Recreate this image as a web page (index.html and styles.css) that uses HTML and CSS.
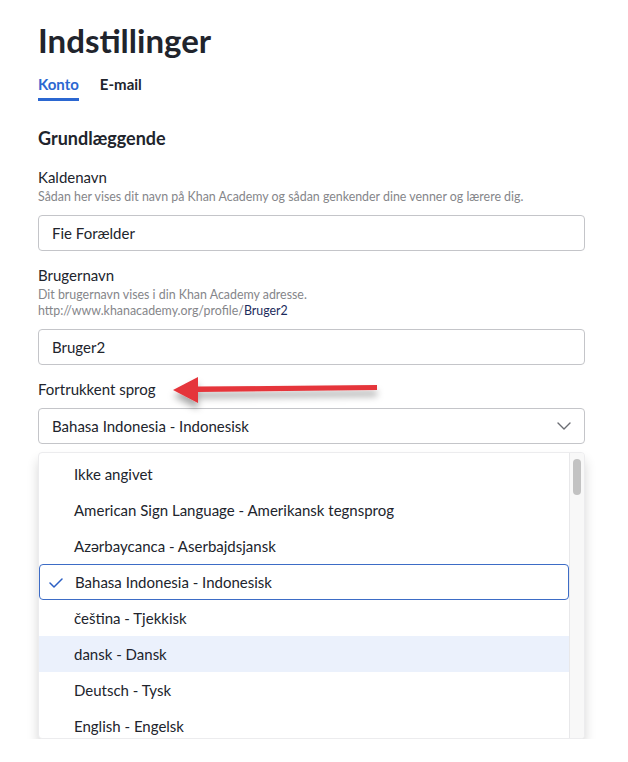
FILE: index.html
```html
<!DOCTYPE html>
<html lang="da">
<head>
    <meta charset="UTF-8">
    <meta name="viewport" content="width=device-width, initial-scale=1.0">
    <title>Indstillinger</title>
    <link rel="stylesheet" href="styles.css">
</head>
<body>
    <div class="page">
        <h1 class="page-title">Indstillinger</h1>

        <!-- Faner -->
        <div class="tabs">
            <a class="tab active" href="#">Konto</a>
            <a class="tab" href="#">E-mail</a>
        </div>

        <h2 class="section-title">Grundlæggende</h2>

        <div class="field">
            <label class="field-label" for="nickname">Kaldenavn</label>
            <p class="field-desc">Sådan her vises dit navn på Khan Academy og sådan genkender dine venner og lærere dig.</p>
            <input class="text-input" id="nickname" type="text" value="Fie Forælder">
        </div>

        <div class="field">
            <label class="field-label" for="username">Brugernavn</label>
            <p class="field-desc">Dit brugernavn vises i din Khan Academy adresse.<br>http://www.khanacademy.org/profile/<span class="desc-link">Bruger2</span></p>
            <input class="text-input" id="username" type="text" value="Bruger2">
        </div>

        <div class="field">
            <label class="field-label no-desc">Fortrukkent sprog</label>
            <div class="select-box">
                <span>Bahasa Indonesia - Indonesisk</span>
                <svg class="chevron" width="14" height="8" viewBox="0 0 14 8">
                    <path d="M1 1l6 6 6-6" fill="none" stroke="#6b6d73" stroke-width="1.4" stroke-linecap="round" stroke-linejoin="round"/>
                </svg>
            </div>

            <!-- Åben liste med sprog -->
            <div class="dropdown">
                <ul class="options">
                    <li>Ikke angivet</li>
                    <li>American Sign Language - Amerikansk tegnsprog</li>
                    <li>Azərbaycanca - Aserbajdsjansk</li>
                    <li class="selected">
                        <svg class="check" width="14" height="10" viewBox="0 0 14 10">
                            <path d="M1 5l4 4 8-8" fill="none" stroke="#2b5fc4" stroke-width="1.5" stroke-linecap="round" stroke-linejoin="round"/>
                        </svg>
                        Bahasa Indonesia - Indonesisk
                    </li>
                    <li>čeština - Tjekkisk</li>
                    <li class="hover">dansk - Dansk</li>
                    <li>Deutsch - Tysk</li>
                    <li>English - Engelsk</li>
                </ul>
                <div class="scrollbar"><div class="thumb"></div></div>
            </div>
        </div>
    </div>

    <!-- Rød pil der peger på sprogvalget -->
    <svg class="arrow" width="240" height="50" viewBox="0 0 240 50">
        <defs>
            <filter id="arrowShadow" x="-20%" y="-50%" width="140%" height="220%">
                <feDropShadow dx="0" dy="6" stdDeviation="3.5" flood-color="#000" flood-opacity="0.35"/>
            </filter>
        </defs>
        <g filter="url(#arrowShadow)">
            <path d="M47 21.5 L227 20 L227 25 L47 27 Z" fill="#e5343a"/>
            <path d="M23 25 L48 12 L48 38 Z" fill="#e5343a"/>
        </g>
    </svg>
</body>
</html>
```

FILE: styles.css
```css
body {
    margin: 0;
    padding: 0;
    background-color: #ffffff;
    color: #21242c;
    font-family: Lato, "Open Sans", sans-serif;
}

.page {
    width: 547px;
    margin-left: 38px;
    padding-top: 20px;
}

/* Overskrift */
.page-title {
    margin: 0;
    font-size: 33px;
    line-height: 40px;
    font-weight: 700;
}

/* Faner */
.tabs {
    display: flex;
    gap: 21px;
    margin-top: 14px;
}
.tab {
    font-size: 15px;
    line-height: 20px;
    font-weight: 700;
    color: #21242c;
    text-decoration: none;
    padding-bottom: 4px;
    border-bottom: 3px solid transparent;
}
.tab.active {
    color: #2b67d1;
    border-bottom-color: #2b67d1;
}

.section-title {
    margin: 25px 0 0;
    font-size: 18px;
    line-height: 24px;
    font-weight: 700;
}

/* Felter */
.field {
    margin-top: 17px;
}
.field + .field {
    margin-top: 14px;
}
.field-label {
    display: block;
    font-size: 15px;
    line-height: 20px;
    margin-bottom: 2px;
}
.field-label.no-desc {
    margin-bottom: 9px;
}
.field-desc {
    margin: 0 0 10px;
    font-size: 12.4px;
    line-height: 16px;
    color: #85868a;
}
.desc-link {
    color: #1b2a5c;
}

.text-input,
.select-box {
    display: flex;
    align-items: center;
    box-sizing: border-box;
    width: 100%;
    height: 36px;
    padding: 0 12px 0 13px;
    border: 1px solid #c4c5c9;
    border-radius: 4px;
    font-family: inherit;
    font-size: 15px;
    color: #21242c;
    background: #fff;
}
.select-box {
    justify-content: space-between;
}
.chevron {
    margin-right: 1px;
}

/* Dropdown */
.dropdown {
    display: grid;
    grid-template-columns: 1fr 15px;
    height: 287px;
    margin-top: 8px;
    border: 1px solid #ececee;
    border-radius: 4px;
    box-sizing: border-box;
    overflow: hidden;
    box-shadow: 0 8px 12px rgba(0, 0, 0, 0.16);
    background: #fff;
}
.options {
    list-style: none;
    margin: 0;
    padding: 3px 0 0;
    overflow: hidden;
}
.options li {
    position: relative;
    box-sizing: border-box;
    height: 36px;
    display: flex;
    align-items: center;
    padding-left: 35px;
    font-size: 15px;
    color: #21242c;
    border: 1px solid transparent;
    border-left: 0;
}
.options li.selected {
    border: 1px solid #3d6cc6;
    border-radius: 4px;
}
.options li.hover {
    background-color: #ebf1fc;
}
.check {
    position: absolute;
    left: 9px;
    top: 13px;
}

.scrollbar {
    background: #f8f8f8;
    border-left: 1px solid #e8e8ea;
    padding: 6px 3px 0 3px;
}
.thumb {
    height: 36px;
    border-radius: 4px;
    background: #c2c2c2;
}

/* Pil */
.arrow {
    position: absolute;
    left: 150px;
    top: 365px;
}
```
